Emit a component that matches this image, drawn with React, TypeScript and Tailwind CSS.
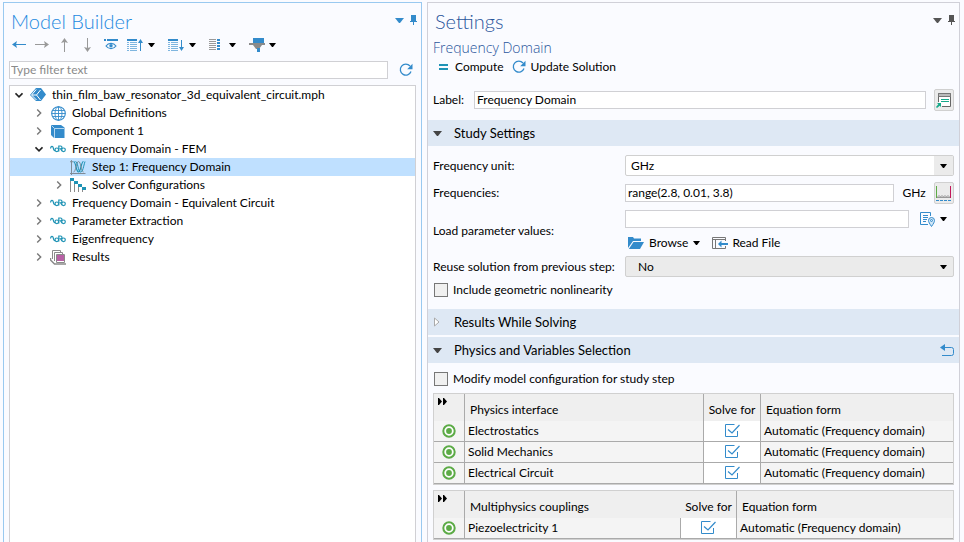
import { useState, type ReactNode } from 'react'
import clsx from 'clsx'

type IconProps = { className?: string }

/* ---------- small glyphs ---------- */

function Caret({ className = 'text-black' }: IconProps) {
  return (
    <svg width="7" height="4" viewBox="0 0 7 4" className={clsx('shrink-0', className)} aria-hidden="true">
      <path d="M0 0h7L4 4H3z" fill="currentColor" />
    </svg>
  )
}

function WideCaret({ className }: IconProps) {
  return (
    <svg width="9" height="5" viewBox="0 0 9 5" className={clsx('shrink-0', className)} aria-hidden="true">
      <path d="M0 0h9L5 5H4z" fill="currentColor" />
    </svg>
  )
}

function PinIcon({ className }: IconProps) {
  return (
    <svg width="7" height="10" viewBox="0 0 7 10" className={clsx('shrink-0', className)} aria-hidden="true">
      <path d="M1 0h5v6h1v1H4v3H3V7H0V6h1z" fill="currentColor" />
    </svg>
  )
}

function Chevron({ open }: { open?: boolean }) {
  return (
    <svg width="8" height="8" viewBox="0 0 8 8" fill="none" aria-hidden="true">
      {open
        ? <path d="M.5 2.3 4 5.8l3.5-3.5" stroke="#222" strokeWidth="1.6" />
        : <path d="M2.2.5 5.7 4 2.2 7.5" stroke="#777" strokeWidth="1.4" />}
    </svg>
  )
}

function RefreshIcon() {
  return (
    <svg width="14" height="14" viewBox="0 0 14 14" fill="none" aria-hidden="true">
      <path d="M11 3A5.5 5.5 0 1 0 12 8.5" stroke="#338bcb" strokeWidth="1.3" />
      <path d="M13.5.8v5.4H8.2z" fill="#338bcb" />
    </svg>
  )
}

/* ---------- toolbar icons ---------- */

function ArrowIcon({ dir, className }: { dir: 'left' | 'right' | 'up' | 'down'; className: string }) {
  const shafts = {
    left: 'M14 6.5H3',
    right: 'M0 6.5h11',
    up: 'M6.5 14V3',
    down: 'M6.5 0v11',
  }
  const heads = {
    left: 'M0 6.5 5 3 4 6.5 5 10z',
    right: 'M14 6.5 9 3l1 3.5L9 10z',
    up: 'M6.5 0 3 5l3.5-1L10 5z',
    down: 'M6.5 14 3 9l3.5 1L10 9z',
  }
  return (
    <svg width="14" height="14" viewBox="0 0 14 14" fill="none" className={className} aria-hidden="true">
      <path d={shafts[dir]} stroke="currentColor" />
      <path d={heads[dir]} fill="currentColor" />
    </svg>
  )
}

function EyeIcon() {
  return (
    <svg width="14" height="12" viewBox="0 0 14 12" fill="none" aria-hidden="true">
      <path d="M0 1h2M3 1h11" stroke="#338bcb" strokeWidth="2" />
      <path d="M2 7C4.5 3.6 9.5 3.6 12 7 9.5 10.4 4.5 10.4 2 7z" stroke="#338bcb" strokeWidth="1.2" />
      <circle cx="7" cy="6.8" r="1.7" fill="#338bcb" />
    </svg>
  )
}

function ListArrowIcon({ up }: { up?: boolean }) {
  return (
    <svg width="17" height="12" viewBox="0 0 17 12" fill="none" aria-hidden="true">
      <path d="M0 1h10" stroke="#338bcb" strokeWidth="2" />
      <path d="M0 3.5h2M0 5.5h2M0 7.5h2M0 9.5h2M0 11.5h2M3 3.5h7M3 5.5h7M3 7.5h7M3 9.5h7M3 11.5h7" stroke="#7fb6df" />
      <path d={up ? 'M13.5 12V1.5' : 'M13.5 1v9.5'} stroke="#338bcb" />
      <path d={up ? 'M13.5 0 16 4h-5z' : 'M13.5 12 16 8h-5z'} fill="#338bcb" />
    </svg>
  )
}

function ColumnsIcon() {
  return (
    <svg width="12" height="12" viewBox="0 0 12 12" fill="none" aria-hidden="true">
      <path d="M0 .5h7M0 2.5h7M0 4.5h7M0 6.5h7M0 8.5h7M0 10.5h7" stroke="#999" />
      <path d="M9.500 0v12" stroke="#338bcb" strokeWidth="3" strokeDasharray="2 1" />
    </svg>
  )
}

function FilterIcon() {
  return (
    <svg width="16" height="16" viewBox="0 0 16 16" aria-hidden="true">
      <path d="M0 6h16v2h-3l-3 4H7L4 8H0z" fill="#8a8a8a" />
      <path d="M4 1h11v5H4zM8 11h3v4H8z" fill="#338bcb" />
    </svg>
  )
}

/* ---------- tree icons ---------- */

function RootIcon() {
  return (
    <svg width="16" height="14" viewBox="0 0 16 14" aria-hidden="true">
      <path d="M0 7 6 0h5l5 6.5L11 13H6z" fill="#338bcb" />
      <path d="M6.2 1.5 1.5 7l5 5M2 7h4.5L10.5 2M6.5 7l4 5" fill="none" stroke="#fff" />
    </svg>
  )
}

function GlobeIcon() {
  return (
    <svg width="16" height="16" viewBox="0 0 16 16" fill="none" stroke="#338bcb" aria-hidden="true">
      <circle cx="8.5" cy="8.5" r="6.8" strokeWidth="1.1" />
      <ellipse cx="8.5" cy="8.5" rx="3.5" ry="6.8" strokeWidth=".9" />
      <path d="M8.5 1.5v14M1.5 8.5h14M2.8 5.5h11.4M2.8 11.5h11.4" strokeWidth=".9" />
    </svg>
  )
}

function CubeIcon() {
  return (
    <svg width="14" height="14" viewBox="0 0 14 14" aria-hidden="true">
      <path d="M0 1h10l3.5 2.5V14H3L0 11z" fill="#338bcb" />
      <path d="M.5 1.5 3.5 4.5H13M3.5 4.5V14" fill="none" stroke="#b5d7f0" />
    </svg>
  )
}

function StudyIcon() {
  return (
    <svg width="16" height="8" viewBox="0 0 16 8" fill="none" stroke="#1f93b5" strokeWidth="1.2" aria-hidden="true">
      <path d="M.5 3.5C1 .8 2.8.8 3.3 3s.9 3 2 2.5" />
      <circle cx="6.8" cy="4.8" r="1.8" />
      <path d="M8.8 6.5V1h1.7c2 0 2 2.8 0 2.8L12 6" />
      <circle cx="13.5" cy="4.8" r="1.8" />
    </svg>
  )
}

function FrequencyStepIcon() {
  return (
    <svg width="16" height="16" viewBox="0 0 16 16" fill="none" aria-hidden="true">
      <path d="M1.5 16V1.5M0 3.5l1.5-2L3 3.5M0 14.5h15.5" stroke="#808b95" />
      <path d="M3.5 2.5c2.500 0 2.500 10.500 5 10.500s2.500-10.500 5-10.500" stroke="#1f93b5" strokeWidth="1.2" />
      <path d="M3.5 13c2.500 0 2.500-10.500 5-10.500s2.500 10.500 5 10.500" stroke="#808b95" />
      <path d="M5.500 2.500c2.500 0 2.500 10.500 5 10.500s3-6 4.500-10.500" stroke="#1f93b5" />
    </svg>
  )
}

function SolverIcon() {
  return (
    <svg width="16" height="16" viewBox="0 0 16 16" fill="none" aria-hidden="true">
      <path d="M.5 3v12M4.5 6v9M8.5 9v6M12.5 12v3" stroke="#8a8a8a" />
      <path d="M0 1h4v3H0zM4 4h4v3H4zM8 7h4v3H8zM12 10h4v3h-4z" fill="#1f93b5" />
    </svg>
  )
}

function ResultsIcon() {
  return (
    <svg width="16" height="16" viewBox="0 0 16 16" fill="none" aria-hidden="true">
      <path d="M2.5 10V1.5h8V4M4.5 12V3.5h8V6" stroke="#8a8a8a" />
      <path d="M6.5 5.5h8v8h-8z" fill="#fff" stroke="#8a8a8a" />
      <path d="M7 6h7v6H7z" fill="#b860a5" />
      <path d="M.5 9v2l4 4H16" stroke="#8a8a8a" strokeWidth="1.5" />
    </svg>
  )
}

/* ---------- settings icons ---------- */

function GoToSourceIcon() {
  return (
    <svg width="16" height="16" viewBox="0 0 16 16" fill="none" aria-hidden="true">
      <path d="M2.5 10V1.5h12v13H6" fill="#fff" stroke="#666" />
      <path d="M2.5 1.5h12v3h-12z" fill="#bbb" stroke="#777" />
      <path d="M5 7.5h8M5 9.5h8" stroke="#16a98a" />
      <path d="M1 11h4v4l-1.3-1.3L1 16l-1-1 2.3-2.7z" fill="#16a98a" />
    </svg>
  )
}

function RangeIcon() {
  return (
    <svg width="16" height="16" viewBox="0 0 16 16" fill="none" aria-hidden="true">
      <path d="M.5 1v12" stroke="#5cab46" />
      <path d="M14.5 1v12" stroke="#c2185b" />
      <path d="M1 12.5h13M1.5 12q1.500-3 3 0 1.500-3 3 0 1.500-3 3 0 1.500-3 3 0" stroke="#999" />
      <path d="M0 15.5h15" stroke="#338bcb" strokeDasharray="3 1" />
    </svg>
  )
}

function ListPinIcon() {
  return (
    <svg width="16" height="16" viewBox="0 0 16 16" fill="none" stroke="#338bcb" aria-hidden="true">
      <path d="M8 13.5H.5v-12h10V5" />
      <path d="M3 4.5h5M3 6.5h5M3 8.5h4M3 10.5h3" />
      <path d="M11.5 15.5C9.5 12.5 8.5 11 8.5 9.5a3 3 0 0 1 6 0c0 1.5-1 3-3 6z" fill="#d4e8f7" />
      <circle cx="11.5" cy="9.5" r="1" />
    </svg>
  )
}

function FolderIcon() {
  return (
    <svg width="16" height="12" viewBox="0 0 16 12" aria-hidden="true">
      <path d="M0 0h5l1 1.5h7V4H5L0 11z" fill="#338bcb" />
      <path d="M5.5 5H16l-4 7H.8z" fill="#338bcb" />
    </svg>
  )
}

function ReadFileIcon() {
  return (
    <svg width="16" height="12" viewBox="0 0 16 12" fill="none" aria-hidden="true">
      <path d="M13.5 4V.5H.5v11h13V9M.5 2.5h13M3.5 2.5v9" stroke="#777" />
      <path d="M16 7H8" stroke="#338bcb" strokeWidth="2" />
      <path d="M9.5 3.5v7L6 7z" fill="#338bcb" />
    </svg>
  )
}

function ResetIcon() {
  return (
    <svg width="14" height="12" viewBox="0 0 14 12" fill="none" aria-hidden="true">
      <path d="M3 3.5h8.5q2 0 2 2v4q0 2-2 2H2" stroke="#338bcb" />
      <path d="M5 0v7L0 3.5z" fill="#338bcb" />
    </svg>
  )
}

function ActiveIcon() {
  return (
    <svg width="14" height="14" viewBox="0 0 14 14" fill="none" className="mx-auto" aria-hidden="true">
      <circle cx="7" cy="7" r="5.7" fill="#fff" stroke="#5cab46" strokeWidth="2" />
      <circle cx="7" cy="7" r="2.9" fill="#5cab46" />
    </svg>
  )
}

function FastForwardIcon() {
  return (
    <svg width="9" height="7" viewBox="0 0 9 7" aria-hidden="true">
      <path d="M0 0h1l3 3.5L1 7H0zM5 0h1l3 3.5L6 7H5z" fill="#000" />
    </svg>
  )
}

/* ---------- Model Builder ---------- */

interface TreeItem {
  label: string
  icon: ReactNode
  level: 0 | 1 | 2
  state?: 'open' | 'closed'
  selected?: boolean
}

const tree: TreeItem[] = [
  { label: 'thin_film_baw_resonator_3d_equivalent_circuit.mph', icon: <RootIcon />, level: 0, state: 'open' },
  { label: 'Global Definitions', icon: <GlobeIcon />, level: 1, state: 'closed' },
  { label: 'Component 1', icon: <CubeIcon />, level: 1, state: 'closed' },
  { label: 'Frequency Domain - FEM', icon: <StudyIcon />, level: 1, state: 'open' },
  { label: 'Step 1: Frequency Domain', icon: <FrequencyStepIcon />, level: 2, selected: true },
  { label: 'Solver Configurations', icon: <SolverIcon />, level: 2, state: 'closed' },
  { label: 'Frequency Domain - Equivalent Circuit', icon: <StudyIcon />, level: 1, state: 'closed' },
  { label: 'Parameter Extraction', icon: <StudyIcon />, level: 1, state: 'closed' },
  { label: 'Eigenfrequency', icon: <StudyIcon />, level: 1, state: 'closed' },
  { label: 'Results', icon: <ResultsIcon />, level: 1, state: 'closed' },
]

const indent = { 0: 'pl-px', 1: 'pl-[21px]', 2: 'pl-[41px]' }

function PanelHeader({ title, tone, buttons }: { title: string; tone: string; buttons: string }) {
  return (
    <header className="flex h-8 items-start justify-between">
      <h1 className={clsx('mt-1 text-[20px] leading-7 font-light', tone)}>{title}</h1>
      <div className={clsx('mt-3 flex items-center gap-[6px]', buttons)}>
        <button aria-label={`${title} menu`}><WideCaret /></button>
        <button aria-label={`Pin ${title}`}><PinIcon /></button>
      </div>
    </header>
  )
}

function ModelBuilder() {
  return (
    <section className="flex min-w-0 flex-col border border-b-0 border-[#99c9f0]">
      <div className="pr-1 pl-[7px]">
        <PanelHeader title="Model Builder" tone="text-[#1e8ae0]" buttons="text-[#338bcb]" />
      </div>

      <div className="flex h-5 items-center gap-[9px] pl-2">
        <button aria-label="Previous"><ArrowIcon dir="left" className="text-[#338bcb]" /></button>
        <button aria-label="Next"><ArrowIcon dir="right" className="text-[#999]" /></button>
        <button aria-label="Move up"><ArrowIcon dir="up" className="text-[#999]" /></button>
        <button aria-label="Move down"><ArrowIcon dir="down" className="text-[#999]" /></button>
        <button aria-label="Show"><EyeIcon /></button>
        <button aria-label="Collapse all" className="flex items-center gap-1"><ListArrowIcon up /><Caret /></button>
        <button aria-label="Expand all" className="ml-1 flex items-center gap-1"><ListArrowIcon /><Caret /></button>
        <button aria-label="Columns" className="ml-1 flex items-center gap-2"><ColumnsIcon /><Caret /></button>
        <button aria-label="Filter" className="ml-1 flex items-center gap-1"><FilterIcon /><Caret /></button>
      </div>

      <div className="mt-[6px] flex items-center px-[5px]">
        <input
          aria-label="Type filter text"
          placeholder="Type filter text"
          className="h-[18px] min-w-0 flex-1 border border-[#d0d0d4] bg-white px-px placeholder:text-[#8a8a8a]"
        />
        <button aria-label="Refresh" className="mr-[3px] ml-[11px]"><RefreshIcon /></button>
      </div>

      <ul role="tree" className="mx-[5px] mt-[6px] flex-1 border border-b-0 border-[#d0d0d4] bg-white">
        {tree.map(item => (
          <li
            key={item.label}
            role="treeitem"
            aria-selected={!!item.selected}
            className={clsx('flex h-[18px] items-center', indent[item.level], item.selected && 'bg-[#bfe0ff]')}
          >
            <span className="grid w-4 place-items-center">{item.state && <Chevron open={item.state === 'open'} />}</span>
            <span className="ml-[3px] grid w-4 place-items-center">{item.icon}</span>
            <span className="ml-[6px] whitespace-nowrap">{item.label}</span>
          </li>
        ))}
      </ul>
    </section>
  )
}

/* ---------- Settings ---------- */

function SectionBar({ title, open, action }: { title: string; open?: boolean; action?: ReactNode }) {
  return (
    <div className="flex h-[26px] items-center bg-[#dee8f4] px-[5px]">
      <button aria-expanded={!!open} className="flex flex-1 items-center text-left text-[13px]">
        <span className="flex w-[21px]">
          {open
            ? <WideCaret className="text-[#444]" />
            : (
              <svg width="7" height="10" viewBox="0 0 7 10" aria-hidden="true">
                <path d="M1.5 1v8l4.500-4z" fill="#fff" stroke="#aaa" />
              </svg>
            )}
        </span>
        {title}
      </button>
      {action}
    </div>
  )
}

function Select({ id, value, plain }: { id: string; value: string; plain?: boolean }) {
  return (
    <div className="grid flex-1 items-center">
      <select
        id={id}
        defaultValue={value}
        className={clsx(
          'col-start-1 row-start-1 h-[21px] w-full appearance-none rounded-xs border border-[#d0d0d0]',
          plain ? 'bg-[#ebebeb] pl-3' : 'bg-white pl-[5px]',
        )}
      >
        <option>{value}</option>
      </select>
      <span
        className={clsx(
          'pointer-events-none col-start-1 row-start-1 mr-px grid h-[19px] w-[19px] place-items-center justify-self-end',
          !plain && 'bg-[#ebebeb]',
        )}
      >
        <Caret />
      </span>
    </div>
  )
}

function Check({ label }: { label: string }) {
  return (
    <label className="flex items-center gap-[5px] pl-px">
      <input type="checkbox" className="size-[14px] appearance-none border border-[#777] bg-[#f0f0f0]" />
      {label}
    </label>
  )
}

function SolveFor({ name }: { name: string }) {
  const [on, setOn] = useState(true)
  return (
    <label className="mx-auto grid w-[15px]">
      <input
        type="checkbox"
        aria-label={`Solve for ${name}`}
        checked={on}
        onChange={e => setOn(e.target.checked)}
        className="col-start-1 row-start-1 size-[14px] appearance-none"
      />
      <svg width="15" height="14" viewBox="0 0 15 14" fill="none" stroke="#338bcb" className="col-start-1 row-start-1" aria-hidden="true">
        <path d="M9.5.5h-9v12h12V7" />
        {on && <path d="M3 5.5 7 9l7.5-8" strokeWidth="1.2" />}
      </svg>
    </label>
  )
}

function SelectionTable({ heading, rows, wide }: { heading: string; rows: string[]; wide?: boolean }) {
  const line = 'border-r border-[#aaa]'
  return (
    <div className="border border-[#d0d0d0]">
      <table className="w-full table-fixed border-separate border-spacing-0 bg-[#f4f4f4] text-left">
        <colgroup>
          <col className="w-[31px]" />
          <col />
          <col className={wide ? 'w-[57px]' : 'w-[56px]'} />
          <col className={wide ? 'w-[192px]' : 'w-[216px]'} />
        </colgroup>
        <thead>
          <tr className="h-[27px] bg-[#efefef]">
            <th className={clsx('pt-1 pl-1 align-top', line)}><FastForwardIcon /></th>
            <th className={clsx('pt-[5px] pl-[5px] font-normal', wide && line)}>{heading}</th>
            <th className={clsx('pt-[5px] text-center font-normal whitespace-nowrap', line)}>Solve for</th>
            <th className="pt-[5px] pl-[5px] font-normal">Equation form</th>
          </tr>
        </thead>
        <tbody>
          {rows.map(row => (
            <tr key={row} className="h-[21px]">
              <td className={clsx('border-b', line)}><ActiveIcon /></td>
              <td className={clsx('border-b pl-[3px]', line)}>{row}</td>
              <td className={clsx('border-b bg-white', line)}><SolveFor name={row} /></td>
              <td className="border-b border-[#aaa] pl-[3px] whitespace-nowrap">Automatic (Frequency domain)</td>
            </tr>
          ))}
        </tbody>
      </table>
    </div>
  )
}

const field = 'min-w-0 flex-1 border border-[#d0d0d4] bg-white px-[2px]'
const iconButton = 'grid h-[22px] w-5 shrink-0 place-items-center rounded-xs border border-[#d0d0d0] bg-[#ebebeb]'
const caption = 'w-48 shrink-0 whitespace-nowrap'

function Settings() {
  return (
    <section className="min-w-0 border border-b-0 border-[#d0d0d8]">
      <div className="pr-1 pl-[7px]">
        <PanelHeader title="Settings" tone="text-[#2a569c]" buttons="text-[#555]" />
      </div>
      <h2 className="mt-[3px] pl-[5px] font-['Open_Sans',sans-serif] text-[14px] leading-5 font-light text-[#2a569c]">
        Frequency Domain
      </h2>
      <div className="flex h-[18px] items-center gap-2 pl-[11px]">
        <button className="flex items-center gap-[7px]">
          <svg width="9" height="6" viewBox="0 0 9 6" aria-hidden="true">
            <path d="M0 0h9v2H0zM0 4h9v2H0z" fill="#1f93b5" />
          </svg>
          Compute
        </button>
        <button className="flex items-center gap-[5px]"><RefreshIcon />Update Solution</button>
      </div>

      <div className="mt-[13px] flex items-center px-[5px]">
        <label htmlFor="label" className="w-[41px]">Label:</label>
        <input id="label" defaultValue="Frequency Domain" className={clsx(field, 'mr-2 h-[18px]')} />
        <button aria-label="Go to source" className={iconButton}><GoToSourceIcon /></button>
      </div>

      <div className="mt-[9px]">
        <SectionBar title="Study Settings" open />
      </div>
      <div className="mt-[9px] px-[5px]">
        <div className="flex items-center">
          <label htmlFor="unit" className={caption}>Frequency unit:</label>
          <Select id="unit" value="GHz" />
        </div>
        <div className="mt-[6px] flex items-center">
          <label htmlFor="freqs" className={caption}>Frequencies:</label>
          <input id="freqs" defaultValue="range(2.8, 0.01, 3.8)" className={clsx(field, 'h-[18px]')} />
          <span className="w-10 text-center">GHz</span>
          <button aria-label="Range" className={iconButton}><RangeIcon /></button>
        </div>
        <div className="mt-[6px] flex items-center">
          <label htmlFor="params" className={caption}>Load parameter values:</label>
          <div className="min-w-0 flex-1">
            <div className="flex items-center">
              <input id="params" className={clsx(field, 'mr-[11px] h-[18px]')} />
              <button aria-label="Parameter values location" className="mr-[7px] flex items-center gap-1">
                <ListPinIcon /><Caret />
              </button>
            </div>
            <div className="mt-[6px] flex h-[18px] items-center gap-3 pl-[3px]">
              <button className="flex items-center gap-[5px]"><FolderIcon />Browse<Caret /></button>
              <button className="flex items-center gap-1"><ReadFileIcon />Read File</button>
            </div>
          </div>
        </div>
        <div className="mt-1 flex items-center">
          <label htmlFor="reuse" className={caption}>Reuse solution from previous step:</label>
          <Select id="reuse" value="No" plain />
        </div>
        <div className="mt-1">
          <Check label="Include geometric nonlinearity" />
        </div>
      </div>

      <div className="mt-[10px] space-y-[2px]">
        <SectionBar title="Results While Solving" />
        <SectionBar
          title="Physics and Variables Selection"
          open
          action={<button aria-label="Reset selection"><ResetIcon /></button>}
        />
      </div>
      <div className="mt-[7px] px-[5px]">
        <Check label="Modify model configuration for study step" />
        <div className="mt-[5px] space-y-[5px]">
          <SelectionTable
            heading="Physics interface"
            rows={['Electrostatics', 'Solid Mechanics', 'Electrical Circuit']}
            wide
          />
          <SelectionTable heading="Multiphysics couplings" rows={['Piezoelectricity 1']} />
        </div>
      </div>
    </section>
  )
}

export default function App() {
  return (
    <main className="grid min-h-screen grid-cols-[419fr_533fr] gap-[5px] bg-[#fafbff] pt-[2px] pr-1 pl-[3px] font-[Lato,'Open_Sans',sans-serif] text-[12px] leading-[18px] text-black">
      <ModelBuilder />
      <Settings />
    </main>
  )
}
